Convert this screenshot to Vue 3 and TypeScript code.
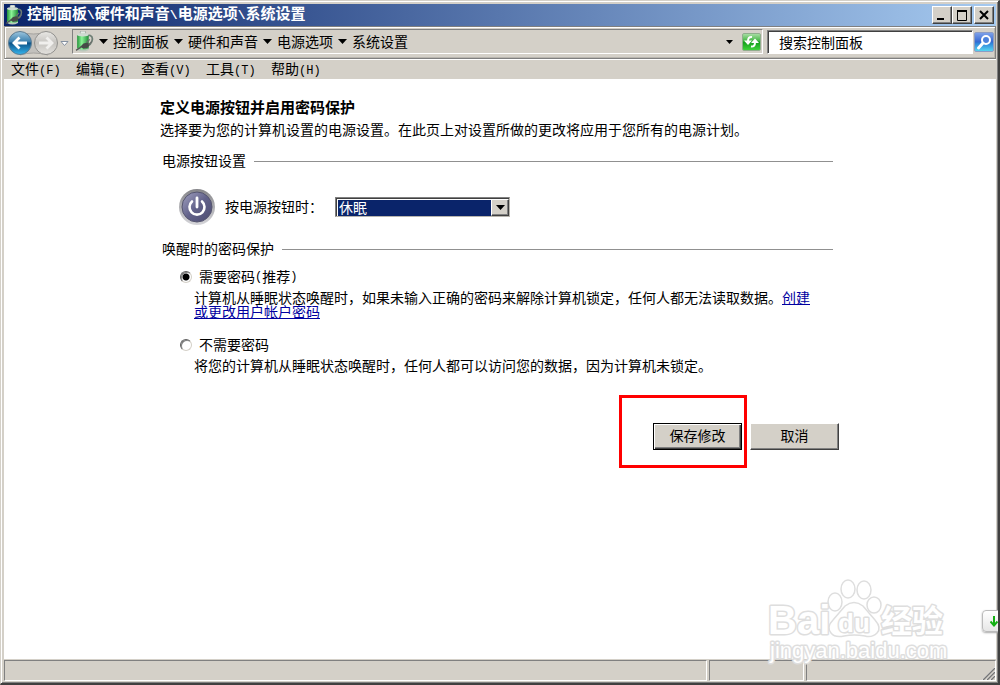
<script setup lang="ts">
import { ref } from 'vue'

const path: string[] = ['控制面板', '硬件和声音', '电源选项', '系统设置']
const menus: { name: string; key: string }[] = [
  { name: '文件', key: '(F)' },
  { name: '编辑', key: '(E)' },
  { name: '查看', key: '(V)' },
  { name: '工具', key: '(T)' },
  { name: '帮助', key: '(H)' },
]
const actions: string[] = ['不采取任何操作', '睡眠', '休眠', '关机']
const powerAction = ref('休眠')
const protection = ref('required')
const search = ref('搜索控制面板')
</script>

<template>
  <div class="window">
    <svg width="0" height="0" class="defs" aria-hidden="true">
      <defs>
        <linearGradient id="battery" x1="0" x2="1" y1="0" y2="0">
          <stop offset="0" stop-color="#23923a" />
          <stop offset="0.4" stop-color="#8cf597" />
          <stop offset="1" stop-color="#1f8a36" />
        </linearGradient>
        <symbol id="power-plan" viewBox="0 0 18 20">
          <path d="M12 4q6 0 4 6q-1 3-4 4" fill="none" stroke="#6d7d74" stroke-width="1.600" />
          <rect x="5" y="0" width="5" height="3" rx="1" fill="#e4eae4" stroke="#7d8a80" stroke-width="0.500" />
          <path d="M2 4q6-3 11 0v13q-5 3-11 0z" fill="url(#battery)" />
          <ellipse cx="7.500" cy="3.600" rx="5.500" ry="1.600" fill="#cfdbd1" />
          <path d="M2 16.500q5.500 2.500 11 0v1.500q-5.500 3-11 0z" fill="#b8c8bb" />
          <path d="M5 15l3-3 4-1 2 2-2 3-4 1z" fill="#474c48" />
          <path d="M11 11l3-3M13 13l3-3" stroke="#6a6f6b" stroke-width="1.200" />
          <path d="M1 18.500l5-3.500" stroke="#555" stroke-width="1.300" />
        </symbol>
      </defs>
    </svg>

    <header class="title-bar">
      <svg class="title-icon" aria-hidden="true"><use href="#power-plan" /></svg>
      <h1><template v-for="(part, index) in path" :key="part"><span v-if="index" class="slash">\</span>{{ part }}</template></h1>
      <div class="caption-buttons">
        <button type="button" aria-label="最小化">
          <svg width="16" height="14"><path d="M3 11h7" stroke="#000" stroke-width="2" /></svg>
        </button>
        <button type="button" aria-label="最大化">
          <svg width="16" height="14"><path d="M3.500 3v9.500h9v-9.500" fill="none" stroke="#000" stroke-width="1" /><path d="M3 3h10" stroke="#000" stroke-width="2" /></svg>
        </button>
        <button type="button" class="close" aria-label="关闭">
          <svg width="16" height="14"><path d="M4 3l8 8M12 3l-8 8" stroke="#000" stroke-width="2" /></svg>
        </button>
      </div>
    </header>

    <nav class="toolbar">
      <svg class="travel" viewBox="0 -1 66 28" aria-hidden="true">
        <defs>
          <linearGradient id="back-fill" x1="0" x2="0" y1="0" y2="1">
            <stop offset="0" stop-color="#9dc6de" />
            <stop offset="0.450" stop-color="#3a7fae" />
            <stop offset="0.500" stop-color="#0d5388" />
            <stop offset="1" stop-color="#35b5ee" />
          </linearGradient>
          <linearGradient id="forward-fill" x1="0" x2="0" y1="0" y2="1">
            <stop offset="0" stop-color="#e9e8e5" />
            <stop offset="0.500" stop-color="#c5c3bf" />
            <stop offset="1" stop-color="#e4e2de" />
          </linearGradient>
        </defs>
        <path d="M15 3q13 4 28 0v23q-15-4-28 0z" fill="#c3c1bd" stroke="#a5a39f" />
        <circle cx="15" cy="14" r="11.500" fill="url(#back-fill)" stroke="#5f7c91" />
        <path d="M22 14H9M14.500 8.500L9 14l5.500 5.500" fill="none" stroke="#fff" stroke-width="2.800" />
        <circle cx="41" cy="14" r="11.500" fill="url(#forward-fill)" stroke="#92918e" />
        <path d="M34 14h13M41.500 8.500L47 14l-5.500 5.500" fill="none" stroke="#f0efed" stroke-width="2.800" />
        <path d="M56 12.500h7l-3.500 4z" fill="#fff" stroke="#8590a0" />
      </svg>
      <div class="address">
        <svg class="address-icon" aria-hidden="true"><use href="#power-plan" /></svg>
        <template v-for="part in path" :key="part">
          <svg class="arrow" viewBox="0 0 9 5" aria-hidden="true"><path d="M0 0h9L4.500 5z" /></svg>
          <a href="#">{{ part }}</a>
        </template>
        <button type="button" class="history" aria-label="以前的位置">
          <svg width="7" height="4" viewBox="0 0 7 4"><path d="M0 0h7L3.500 4z" /></svg>
        </button>
        <button type="button" class="refresh" aria-label="刷新">
          <svg width="17" height="16" viewBox="0 0 17 16">
            <path d="M9 3q-4-0.500-4 4M8 12.500q4 0.500 4-4" fill="none" stroke="#fff" stroke-width="2" />
            <path d="M1 6.500h8L5 11zM8 9h8L12 4.500z" fill="#fff" />
          </svg>
        </button>
      </div>
      <input v-model="search" class="search" type="text" aria-label="搜索控制面板" />
      <button type="button" class="search-button" aria-label="搜索">
        <svg width="19" height="19" viewBox="0 0 19 19">
          <circle cx="11" cy="7" r="4" fill="#4d82dc" stroke="#fff" stroke-width="2" />
          <path d="M8 10l-4.500 5" stroke="#fff" stroke-width="3" stroke-linecap="round" />
        </svg>
      </button>
    </nav>

    <div class="menu-bar">
      <button v-for="menu in menus" :key="menu.key" type="button">{{ menu.name }}<span class="latin">{{ menu.key }}</span></button>
    </div>

    <main class="content">
      <h2>定义电源按钮并启用密码保护</h2>
      <p class="intro">选择要为您的计算机设置的电源设置。在此页上对设置所做的更改将应用于您所有的电源计划。</p>

      <h3 class="section-title">电源按钮设置</h3>
      <div class="power-row">
        <svg class="power-icon" viewBox="0 0 36 36" aria-hidden="true">
          <defs>
            <linearGradient id="power-ring" x1="0" x2="0" y1="0" y2="1">
              <stop offset="0" stop-color="#858589" />
              <stop offset="1" stop-color="#d6d6da" />
            </linearGradient>
            <linearGradient id="power-face" x1="0" x2="1" y1="0" y2="1">
              <stop offset="0" stop-color="#a3a3c2" />
              <stop offset="0.500" stop-color="#62628a" />
              <stop offset="1" stop-color="#4b4b70" />
            </linearGradient>
          </defs>
          <circle cx="18" cy="18" r="18" fill="url(#power-ring)" />
          <circle cx="18" cy="18" r="15" fill="url(#power-face)" stroke="#55556f" />
          <path d="M13 12.500a7.500 7.500 0 1 0 10 0" fill="none" stroke="#fff" stroke-width="2.600" stroke-linecap="round" />
          <path d="M18 9v9" stroke="#fff" stroke-width="2.800" stroke-linecap="round" />
        </svg>
        <label for="power-action">按电源按钮时：</label>
        <div class="select-box">
          <select id="power-action" v-model="powerAction">
            <option v-for="action in actions" :key="action">{{ action }}</option>
          </select>
          <span class="select-arrow"><svg width="9" height="5" viewBox="0 0 9 5"><path d="M0 0h9L4.500 5z" /></svg></span>
        </div>
      </div>

      <h3 class="section-title second">唤醒时的密码保护</h3>
      <div class="choice">
        <label><input v-model="protection" type="radio" name="protection" value="required" />需要密码<span class="latin">(</span>推荐<span class="latin">)</span></label>
        <p>计算机从睡眠状态唤醒时，如果未输入正确的密码来解除计算机锁定，任何人都无法读取数据。<a href="#">创建或更改用户帐户密码</a></p>
      </div>
      <div class="choice later">
        <label><input v-model="protection" type="radio" name="protection" value="none" />不需要密码</label>
        <p>将您的计算机从睡眠状态唤醒时，任何人都可以访问您的数据，因为计算机未锁定。</p>
      </div>

      <div class="buttons">
        <div class="marked"><button type="button" class="default">保存修改</button></div>
        <button type="button">取消</button>
      </div>
    </main>

    <footer class="status-bar">
      <div class="panel"></div>
      <div class="panel middle"></div>
      <div class="panel last">
        <svg width="13" height="13" viewBox="0 0 13 13" aria-hidden="true">
          <path d="M0 13L13 0M4 13l9-9M8 13l5-5" stroke="#fff" stroke-width="1" />
          <path d="M1 13L13 1M5 13l8-8M9 13l4-4" stroke="#777" stroke-width="1.500" />
        </svg>
      </div>
    </footer>

    <svg class="watermark" viewBox="0 0 184 90" aria-hidden="true">
      <g fill="#fff" stroke="#dedede" stroke-width="1.500">
        <ellipse cx="68" cy="28" rx="7" ry="9" />
        <ellipse cx="81" cy="15" rx="7" ry="9" />
        <ellipse cx="97" cy="16" rx="7" ry="9" />
        <ellipse cx="107" cy="31" rx="7" ry="8" />
        <path d="M78 32q9-7 18 0l12 14q7 8 2 13q-5 5-12 3q-11-2-21 0q-9 2-13-3q-5-6 2-13z" />
      </g>
      <g class="outlined">
        <text x="1" y="60" class="wm-bai">Bai</text>
        <text x="71" y="58" class="wm-du">du</text>
        <text x="114" y="58" class="wm-name">经验</text>
        <text x="3" y="84" class="wm-url">jingyan.baidu.com</text>
      </g>
    </svg>

    <button type="button" class="side-tab" aria-label="展开">
      <svg width="8" height="11" viewBox="0 0 8 11"><path d="M4 0v9M0.500 5.500L4 9.500l3.500-4" fill="none" stroke="#12b012" stroke-width="2" /></svg>
    </button>
  </div>
</template>

<style>
body {
  margin: 0;
}
</style>

<style scoped>
.window {
  position: relative;
  box-sizing: border-box;
  min-height: 100vh;
  display: flex;
  flex-direction: column;
  padding: 3px 2px 2px 3px;
  overflow: hidden;
  border: solid;
  border-width: 1px 2px 2px 1px;
  border-color: #d4d0c8 #404040 #404040 #d4d0c8;
  box-shadow: inset 1px 1px #fff, inset -1px -1px #808080;
  background: #d4d0c8;
  color: #000;
  font: 14px/20px "Liberation Sans", "Noto Sans CJK SC", sans-serif;
}
.defs {
  position: absolute;
}
button,
input,
select {
  margin: 0;
  padding: 0;
  font: inherit;
  color: inherit;
}
h1, h2, h3, p {
  margin: 0;
}
.latin {
  font-family: "Liberation Mono", monospace;
  font-size: 12px;
}

.title-bar {
  height: 22px;
  display: flex;
  align-items: center;
  background: linear-gradient(90deg, #0a246a, #a6caf0);
}
.title-icon {
  width: 18px;
  height: 20px;
  margin: 0 4px 0 1px;
}
.title-bar h1 {
  flex: 1;
  color: #fff;
  font-size: 15px;
  line-height: 22px;
}
.slash {
  font-family: "Liberation Mono", monospace;
  font-size: 13px;
}
.caption-buttons {
  display: flex;
  padding-right: 2px;
}
.caption-buttons button {
  width: 20px;
  height: 18px;
  display: grid;
  place-items: center;
  background: #d4d0c8;
  border: 1px solid;
  border-color: #fff #404040 #404040 #fff;
  box-shadow: inset -1px -1px #808080;
}
.caption-buttons .close {
  margin-left: 2px;
}

.toolbar {
  box-sizing: border-box;
  height: 33px;
  display: flex;
  align-items: center;
  padding: 0 1px 2px 0;
  border: 1px solid #808080;
  border-left-color: #a8a59e;
  box-shadow: inset 1px 1px #fff, inset -1px -1px #b8b5ae;
}
.travel {
  width: 66px;
  height: 28px;
  margin-right: 1px;
  flex: none;
}
.address {
  box-sizing: border-box;
  flex: 1;
  height: 25px;
  display: flex;
  align-items: center;
  gap: 5px;
  padding: 0 1px 0 2px;
  border: 1px solid;
  border-color: #808080 #fff #fff #808080;
  white-space: nowrap;
}
.address a {
  color: inherit;
  text-decoration: none;
}
.address-icon {
  width: 19px;
  height: 21px;
}
.arrow {
  width: 9px;
  height: 5px;
}
.history {
  width: 9px;
  height: 20px;
  margin-left: auto;
  border: 0;
  background: none;
  display: grid;
  place-items: center;
}
.refresh {
  width: 19px;
  height: 18px;
  margin-left: 3px;
  border: 1px solid #8fae8c;
  border-radius: 2px;
  display: grid;
  place-items: center;
  background: linear-gradient(#a6dca2, #3fb53f 45%, #149c1c 50%, #3fd43a);
}
.search {
  box-sizing: border-box;
  width: 206px;
  height: 24px;
  margin-left: 4px;
  padding-left: 11px;
  border: 1px solid;
  border-color: #808080 #fff #fff #808080;
  box-shadow: inset 1px 1px #404040;
  background: #fff;
  outline: 0;
}
.search-button {
  width: 20px;
  height: 20px;
  margin-left: 1px;
  border: 1px solid #8c9cc4;
  border-radius: 2px;
  display: grid;
  place-items: center;
  background: linear-gradient(#7c9fe8, #3468d2 50%, #2e7ed8 55%, #55d5f0);
}

.menu-bar {
  height: 20px;
  display: flex;
  padding-left: 7px;
  border-top: 1px solid #fff;
  box-sizing: border-box;
}
.menu-bar button {
  width: 65px;
  text-align: left;
  border: 0;
  background: none;
  line-height: 19px;
  white-space: nowrap;
}

.content {
  flex: 1;
  padding: 18px 157px 20px 156px;
  background: #fff;
}
h2 {
  font-size: 15px;
  line-height: 22px;
}
.intro {
  line-height: 22px;
}
.section-title {
  display: flex;
  align-items: center;
  gap: 8px;
  margin: 10px 6px 0 2px;
  font-size: 14px;
  font-weight: normal;
}
.section-title::after {
  content: "";
  flex: 1;
  height: 1px;
  background: #909090;
}
.power-row {
  height: 40px;
  margin-top: 16px;
  padding-left: 19px;
  display: flex;
  align-items: center;
}
.power-icon {
  width: 36px;
  height: 36px;
  margin-right: 10px;
}
.select-box {
  position: relative;
  box-sizing: border-box;
  width: 175px;
  height: 20px;
  margin-left: 12px;
  padding: 2px;
  display: flex;
  border: 1px solid;
  border-color: #808080 #b8b5ae #b8b5ae #808080;
  box-shadow: inset 1px 1px #404040;
}
.select-box select {
  appearance: none;
  flex: 1;
  height: 16px;
  padding-left: 1px;
  border: 0;
  border-radius: 0;
  outline: 0;
  background: #0a246a;
  color: #fff;
  line-height: 16px;
}
.select-arrow {
  position: absolute;
  top: 1px;
  right: 0;
  bottom: 0;
  width: 16px;
  display: grid;
  place-items: center;
  background: #d4d0c8;
  border: 1px solid;
  border-color: #fff #404040 #404040 #fff;
  box-shadow: inset -1px -1px #808080;
  pointer-events: none;
}
.section-title.second {
  margin-top: 12px;
}
.choice {
  margin-top: 8px;
  padding-left: 20px;
}
.choice.later {
  margin-top: 16px;
}
.choice label {
  display: flex;
  align-items: center;
}
.choice input {
  appearance: none;
  box-sizing: border-box;
  width: 12px;
  height: 12px;
  margin-right: 7px;
  border: 1px solid;
  border-color: #606060 #d4d0c8 #d4d0c8 #606060;
  border-radius: 50%;
  box-shadow: inset 1px 1px #808080;
}
.choice input:checked {
  background: radial-gradient(circle, #000 3px, #fff 4px);
}
.choice p {
  margin: 4px 20px 0 14px;
  line-height: 14px;
}
.choice a {
  color: #0000a0;
}
.buttons {
  display: flex;
  justify-content: flex-end;
  gap: 8px;
  margin-top: 50px;
}
.buttons button {
  width: 89px;
  height: 27px;
  padding-bottom: 2px;
  display: block;
  background: #d4d0c8;
  border: 1px solid;
  border-color: #fff #404040 #404040 #fff;
  box-shadow: inset -1px -1px #808080;
}
.buttons .default {
  border-color: #000;
  box-shadow: inset 1px 1px #fff, inset -1px -1px #404040, inset -2px -2px #808080;
}
.marked {
  position: relative;
}
.marked::after {
  content: "";
  position: absolute;
  inset: -28px -5px -18px -34px;
  border: 3px solid #f00;
  pointer-events: none;
}

.status-bar {
  height: 22px;
  display: flex;
  gap: 2px;
  padding-top: 1px;
  box-sizing: border-box;
}
.panel {
  flex: 1;
  border: 1px solid;
  border-color: #808080 #fff #fff #808080;
}
.panel.middle {
  flex: none;
  width: 93px;
}
.panel.last {
  flex: none;
  width: 188px;
  display: flex;
  justify-content: flex-end;
  align-items: flex-end;
}

.watermark {
  position: absolute;
  right: 47px;
  bottom: 19px;
  width: 184px;
  height: 90px;
  overflow: visible;
  pointer-events: none;
}
.outlined {
  fill: #fff;
  stroke: #dedede;
  stroke-width: 3px;
  stroke-linejoin: round;
  paint-order: stroke;
}
.watermark text {
  font-family: "Liberation Sans", "Noto Sans CJK SC", sans-serif;
}
.wm-bai {
  font-size: 40px;
  font-weight: bold;
}
.wm-du {
  font-size: 26px;
  font-weight: bold;
}
.wm-name {
  font-size: 31px;
  font-weight: bold;
}
.wm-url {
  font-size: 22px;
}
.side-tab {
  position: absolute;
  right: -8px;
  bottom: 51px;
  width: 24px;
  height: 22px;
  padding-left: 7px;
  display: flex;
  align-items: center;
  border: 1px solid #bbb;
  border-radius: 4px;
  background: linear-gradient(#fff, #e6e6e6);
  box-shadow: 0 1px 2px #aaa;
}
</style>
